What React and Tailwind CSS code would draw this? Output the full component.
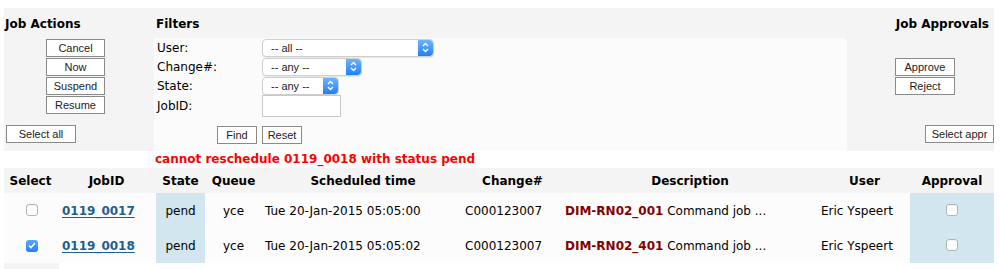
import React from 'react';

const Btn = ({ children, className = '' }) => (
  <button
    className={`block h-[18px] border border-[#8a8a8a] bg-white text-[11px] leading-[16px] text-[#222] font-['Liberation_Sans',Arial,sans-serif] ${className}`}
  >
    {children}
  </button>
);

const Select = ({ width, label }) => (
  <div className={`flex h-[18px] ${width} rounded-[4px] border border-[#cfcfcf] bg-white shadow-[0_1px_1px_rgba(0,0,0,0.08)]`}>
    <span className="flex-1 pl-[8px] text-[11px] leading-[16px] text-[#222] font-['Liberation_Sans',Arial,sans-serif]">
      {label}
    </span>
    <span className="flex w-[15px] items-center justify-center rounded-r-[4px] bg-gradient-to-b from-[#6db3fb] to-[#1c7ff6]">
      <svg width="7" height="11" viewBox="0 0 7 11" fill="none" stroke="white" strokeWidth="1.4">
        <path d="M1 4 L3.5 1.5 L6 4" />
        <path d="M1 7 L3.5 9.5 L6 7" />
      </svg>
    </span>
  </div>
);

const Checkbox = ({ checked }) =>
  checked ? (
    <span className="inline-flex h-[12px] w-[12px] items-center justify-center rounded-[3px] bg-gradient-to-b from-[#5aa8fb] to-[#2180f6]">
      <svg width="8" height="7" viewBox="0 0 8 7" fill="none" stroke="white" strokeWidth="1.6">
        <path d="M1 3.6 L3 5.6 L7 1" />
      </svg>
    </span>
  ) : (
    <span className="inline-block h-[12px] w-[12px] rounded-[3px] border border-[#b4b4b4] bg-white shadow-[inset_0_1px_1px_rgba(0,0,0,0.05)]" />
  );

const jobs = [
  { id: '0119_0017', time: 'Tue 20-Jan-2015 05:05:00', name: 'DIM-RN02_001', checked: false },
  { id: '0119_0018', time: 'Tue 20-Jan-2015 05:05:02', name: 'DIM-RN02_401', checked: true },
];

export default function App() {
  return (
    <div className="w-[1000px] bg-white pt-[8px] pl-[4px] text-[12px] text-black font-['DejaVu_Sans',Verdana,sans-serif]">
      {/* top panel */}
      <div className="flex h-[143px] w-[990px] bg-[#f4f4f4]">
        <div className="w-[150px]">
          <div className="pl-[1px] pt-[9px] font-bold leading-[15px]">Job Actions</div>
          <div className="mt-[7px] ml-[42px] flex flex-col gap-[1px]">
            <Btn className="w-[59px]">Cancel</Btn>
            <Btn className="w-[59px]">Now</Btn>
            <Btn className="w-[59px]">Suspend</Btn>
            <Btn className="w-[59px]">Resume</Btn>
          </div>
          <Btn className="mt-[11px] ml-[2px] w-[70px]">Select all</Btn>
        </div>

        <div className="flex w-[693px] flex-col">
          <div className="h-[30px] pl-[2px] pt-[9px] font-bold leading-[15px]">Filters</div>
          <div className="flex-1 rounded-tr-[3px] bg-[#fbfbfb] pl-[3px]">
            <div className="flex h-[19px] items-center">
              <span className="w-[105px]">User:</span>
              <Select width="w-[172px]" label="-- all --" />
            </div>
            <div className="flex h-[19px] items-center">
              <span className="w-[105px]">Change#:</span>
              <Select width="w-[100px]" label="-- any --" />
            </div>
            <div className="flex h-[19px] items-center">
              <span className="w-[105px]">State:</span>
              <Select width="w-[77px]" label="-- any --" />
            </div>
            <div className="flex h-[22px] items-center">
              <span className="w-[105px]">JobID:</span>
              <span className="h-[22px] w-[79px] border border-[#c8c8c8] bg-white" />
            </div>
            <div className="mt-[9px] ml-[60px] flex gap-[5px]">
              <Btn className="w-[40px]">Find</Btn>
              <Btn className="w-[40px]">Reset</Btn>
            </div>
          </div>
        </div>

        <div className="flex w-[147px] flex-col items-end">
          <div className="pr-[5px] pt-[9px] font-bold leading-[15px]">Job Approvals</div>
          <div className="mt-[26px] mr-[39px] flex flex-col gap-[1px]">
            <Btn className="w-[60px]">Approve</Btn>
            <Btn className="w-[60px]">Reject</Btn>
          </div>
          <Btn className="mt-[30px] w-[69px]">Select appr</Btn>
        </div>
      </div>

      {/* message */}
      <div className="h-[17px] pl-[151px] pt-[1px] font-bold leading-[15px] text-[#ff0000]">
        cannot reschedule 0119_0018 with status pend
      </div>

      {/* jobs table */}
      <table className="w-[990px] table-fixed border-collapse">
        <colgroup>
          <col className="w-[53px]" />
          <col className="w-[99px]" />
          <col className="w-[49px]" />
          <col className="w-[57px]" />
          <col className="w-[202px]" />
          <col className="w-[97px]" />
          <col className="w-[258px]" />
          <col className="w-[91px]" />
          <col className="w-[84px]" />
        </colgroup>
        <thead>
          <tr className="h-[25px] bg-[#f4f4f4] font-bold">
            <th className="p-0 text-center">Select</th>
            <th className="p-0 text-center">JobID</th>
            <th className="p-0 text-center">State</th>
            <th className="p-0 text-center">Queue</th>
            <th className="p-0 text-center">Scheduled time</th>
            <th className="p-0 text-center">Change#</th>
            <th className="p-0 text-center">Description</th>
            <th className="p-0 text-center">User</th>
            <th className="p-0 text-center">Approval</th>
          </tr>
        </thead>
        <tbody>
          {jobs.map((job) => (
            <tr key={job.id} className="h-[35px] bg-[#fcfcfc]">
              <td className="p-0 pl-[2px] text-center align-middle leading-none">
                <Checkbox checked={job.checked} />
              </td>
              <td className="p-0 pl-[5px]">
                <a href="#" className="font-bold text-[#1e5f8c] underline underline-offset-[2px]">
                  {job.id}
                </a>
              </td>
              <td className="bg-[#d2e6f0] p-0 text-center">pend</td>
              <td className="p-0 text-center">yce</td>
              <td className="p-0 pl-[3px] whitespace-nowrap">{job.time}</td>
              <td className="p-0 pl-[1px]">C000123007</td>
              <td className="p-0 pl-[4px] whitespace-nowrap">
                <span className="font-bold text-[#840000]">{job.name}</span> Command job ...
              </td>
              <td className="p-0 pl-[2px] whitespace-nowrap">Eric Yspeert</td>
              <td className="bg-[#d2e6f0] p-0 text-center align-middle leading-none">
                <Checkbox checked={false} />
              </td>
            </tr>
          ))}
        </tbody>
      </table>
      <div className="h-[10px] w-[55px] bg-[#f4f4f4]" />
    </div>
  );
}
